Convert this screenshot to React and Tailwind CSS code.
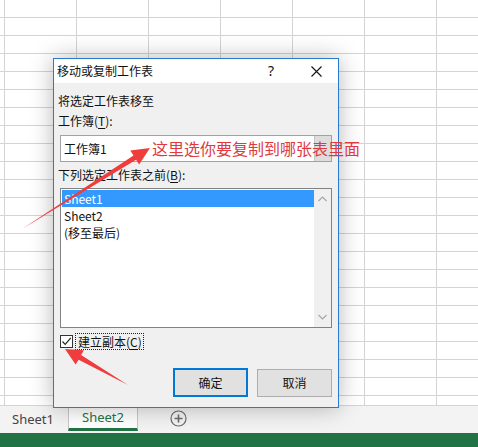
import React from "react";

const CJK = { fontFamily: '"Noto Sans CJK SC", "Noto Sans", sans-serif' };

function Grid() {
  const rows = [];
  const rowHeights = [];
  for (let r = 0; r < 23; r++) rowHeights.push(r === 22 ? "h-[10px]" : "h-[18px]");
  for (let r = 0; r < 23; r++) {
    const cells = [];
    for (let c = 0; c < 8; c++) {
      cells.push(
        <div
          key={c}
          className={
            (c === 0 ? "w-[5px] " : "w-[72px] ") +
            "shrink-0 border-r border-b border-[#d4d4d4] " +
            rowHeights[r]
          }
        />
      );
    }
    rows.push(
      <div key={r} className="flex">
        {cells}
      </div>
    );
  }
  return <div className="flex flex-col h-[406px] overflow-hidden bg-white">{rows}</div>;
}

function Dialog() {
  return (
    <div
      className="absolute left-[53px] top-[58px] w-[286px] h-[350px] border border-[#2b7ad0] bg-[#f0f0f0] flex flex-col shadow-[0_0_22px_rgba(0,0,0,0.28)] text-[12px] text-[#111]"
      style={CJK}
    >
      <div className="h-[24px] bg-white flex items-center shrink-0">
        <div className="flex-1 pl-[3px] leading-[16px]">移动或复制工作表</div>
        <div className="w-[30px] text-center text-[14px] leading-[16px]" style={{ fontFamily: '"Noto Sans", sans-serif' }}>
          ?
        </div>
        <div className="w-[15px]" />
        <div className="w-[30px] flex items-center justify-center">
          <svg width="11" height="11" viewBox="0 0 11 11">
            <path d="M0.5 0.5 L10.5 10.5 M10.5 0.5 L0.5 10.5" stroke="#111" strokeWidth="1.1" fill="none" />
          </svg>
        </div>
        <div className="w-[7px]" />
      </div>
      <div className="flex-1 flex flex-col pl-[6px] pr-[6px] pt-[10px]">
        <div className="leading-[16px] ml-[-2px]">将选定工作表移至</div>
        <div className="leading-[16px] ml-[-2px] mt-[4px]">
          工作簿(<span className="underline underline-offset-2">T</span>):
        </div>
        <div className="mt-[6px] h-[27px] border border-[#a2a2a2] bg-white flex">
          <div className="flex-1 flex items-center pl-[3px] leading-[16px]">工作簿1</div>
          <div className="w-[17px] bg-[#dddddd] border-l border-[#c4c4c4]" />
        </div>
        <div className="mt-[5px] leading-[16px] ml-[-2px]">
          下列选定工作表之前(<span className="underline underline-offset-2">B</span>):
        </div>
        <div className="mt-[5px] h-[140px] border border-[#828282] bg-white flex">
          <div className="flex-1 flex flex-col pt-[1px] pl-[1px]">
            <div className="h-[17px] bg-[#3399ff] text-white flex items-center pl-[2px] leading-[16px]">Sheet1</div>
            <div className="h-[17px] flex items-center pl-[2px] leading-[16px]">Sheet2</div>
            <div className="h-[17px] flex items-center pl-[2px] leading-[16px]">(移至最后)</div>
          </div>
          <div className="w-[17px] bg-[#f0f0f0] flex flex-col items-center justify-between pt-[7px] pb-[7px]">
            <svg width="9" height="6" viewBox="0 0 9 6">
              <path d="M0.5 5 L4.5 1 L8.5 5" stroke="#a6a6a6" strokeWidth="1.2" fill="none" />
            </svg>
            <svg width="9" height="6" viewBox="0 0 9 6">
              <path d="M0.5 1 L4.5 5 L8.5 1" stroke="#a6a6a6" strokeWidth="1.2" fill="none" />
            </svg>
          </div>
        </div>
        <div className="mt-[5px] h-[17px] flex items-center">
          <div className="w-[13px] h-[13px] border border-[#333] bg-white flex items-center justify-center">
            <svg width="11" height="11" viewBox="0 0 11 11">
              <path d="M1.5 5.5 L4.2 8.3 L9.8 1.8" stroke="#222" strokeWidth="1.2" fill="none" />
            </svg>
          </div>
          <div className="ml-[2px] h-[17px] border border-dotted border-[#222] flex items-center pl-[2px] pr-[1px] leading-[16px]">
            建立副本(<span className="underline underline-offset-2">C</span>)
          </div>
        </div>
        <div className="mt-[18px] flex justify-end gap-[9px]">
          <div className="w-[75px] h-[29px] border-2 border-[#0078d7] bg-[#e1e1e1] flex items-center justify-center leading-[16px]">
            确定
          </div>
          <div className="w-[75px] h-[28px] mt-[1px] border border-[#adadad] bg-[#e1e1e1] flex items-center justify-center leading-[16px]">
            取消
          </div>
        </div>
      </div>
    </div>
  );
}

function Arrows() {
  return (
    <svg className="absolute left-0 top-0 pointer-events-none" width="478" height="447" viewBox="0 0 478 447">
      <polygon
        points="22,229 136.1,159.7 139.1,164.6 150,148 130.3,150.6 133.5,155.5"
        fill="#ef3d3d"
      />
      <polygon
        points="128,385 78.6,359.8 75.6,364.6 65,349 83.9,350.3 81.1,355.1"
        fill="#ef3d3d"
      />
    </svg>
  );
}

export default function App() {
  return (
    <div className="relative w-[478px] h-[447px] overflow-hidden bg-white">
      <Grid />
      <div className="h-[27px] bg-[#f3f3f3] flex items-stretch" style={{ fontFamily: '"Noto Sans", sans-serif' }}>
        <div className="w-[68px] flex items-center pl-[12px] text-[13px] text-[#444] leading-[16px] pb-[2px]">Sheet1</div>
        <div className="w-[70px] h-[25px] bg-white border-l border-r border-[#c8c8c8] border-b-[3px] border-b-[#217346] flex items-center justify-center text-[13px] text-[#217346] leading-[16px]">
          Sheet2
        </div>
        <div className="ml-[32px] flex items-center pb-[2px]">
          <svg width="17" height="17" viewBox="0 0 17 17">
            <circle cx="8.5" cy="8.5" r="7.5" stroke="#6b6b6b" strokeWidth="1.2" fill="none" />
            <path d="M8.5 4.5 V12.5 M4.5 8.5 H12.5" stroke="#6b6b6b" strokeWidth="1.6" />
          </svg>
        </div>
      </div>
      <div className="h-[14px] bg-[#217346]" />
      <Dialog />
      <div
        className="absolute left-[152px] top-[138px] text-[16px] leading-[20px] text-[#de3a3f] whitespace-nowrap"
        style={CJK}
      >
        这里选你要复制到哪张表里面
      </div>
      <Arrows />
    </div>
  );
}
